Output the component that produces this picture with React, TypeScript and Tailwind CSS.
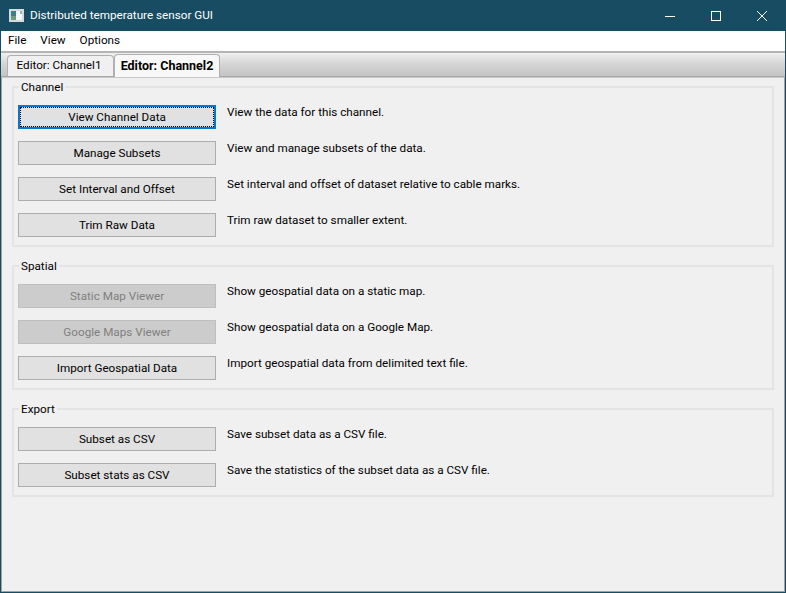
type Row = { label: string; text: string; disabled?: boolean; focused?: boolean };

const groups: { title: string; rows: Row[] }[] = [
  {
    title: 'Channel',
    rows: [
      { label: 'View Channel Data', text: 'View the data for this channel.', focused: true },
      { label: 'Manage Subsets', text: 'View and manage subsets of the data.' },
      { label: 'Set Interval and Offset', text: 'Set interval and offset of dataset relative to cable marks.' },
      { label: 'Trim Raw Data', text: 'Trim raw dataset to smaller extent.' },
    ],
  },
  {
    title: 'Spatial',
    rows: [
      { label: 'Static Map Viewer', text: 'Show geospatial data on a static map.', disabled: true },
      { label: 'Google Maps Viewer', text: 'Show geospatial data on a Google Map.', disabled: true },
      { label: 'Import Geospatial Data', text: 'Import geospatial data from delimited text file.' },
    ],
  },
  {
    title: 'Export',
    rows: [
      { label: 'Subset as CSV', text: 'Save subset data as a CSV file.' },
      { label: 'Subset stats as CSV', text: 'Save the statistics of the subset data as a CSV file.' },
    ],
  },
];

const ActionButton = ({ row }: { row: Row }) => {
  if (row.disabled) {
    return (
      <button disabled className="w-[198px] h-6 shrink-0 pt-px bg-[#cccccc] border border-[#bfbfbf] text-[#7f7f7f]">
        {row.label}
      </button>
    );
  }
  if (row.focused) {
    return (
      <button className="w-[198px] h-6 shrink-0 bg-[#e1e1e1] border-2 border-[#0078d7] text-black">
        <span className="flex items-center justify-center w-full h-full pt-px border border-dotted border-black">
          {row.label}
        </span>
      </button>
    );
  }
  return (
    <button className="w-[198px] h-6 shrink-0 pt-px bg-[#e1e1e1] border border-[#adadad] text-black">
      {row.label}
    </button>
  );
};

const App = () => {
  return (
    <div className="w-[786px] h-[593px] flex flex-col border border-t-0 border-[#174c62] overflow-hidden text-[11.7px] font-['Roboto','Noto_Sans',sans-serif] text-black">
      {/* Title bar */}
      <div className="h-[31px] shrink-0 flex items-center bg-[#174c62] text-white">
        <svg width="16" height="16" viewBox="0 0 16 16" className="ml-[8px] mr-[5px]">
          <rect x="0" y="1" width="15" height="13" fill="#d5dadc" />
          <rect x="2" y="3" width="5" height="9" fill="#3f7f86" />
          <rect x="2" y="8" width="5" height="4" fill="#6d9c7e" />
          <rect x="7" y="3" width="6" height="9" fill="#f4f6f7" />
          <rect x="11" y="3" width="2" height="3" fill="#9fb0b8" />
        </svg>
        <span className="whitespace-nowrap">Distributed temperature sensor GUI</span>
        <div className="ml-auto flex items-center">
          <div className="w-[46px] h-[31px] flex items-center justify-center">
            <svg width="10" height="10" viewBox="0 0 10 10" stroke="white" fill="none">
              <path d="M0 5.5H10" />
            </svg>
          </div>
          <div className="w-[46px] h-[31px] flex items-center justify-center">
            <svg width="10" height="10" viewBox="0 0 10 10" stroke="white" fill="none">
              <rect x="0.5" y="0.5" width="9" height="9" />
            </svg>
          </div>
          <div className="w-[46px] h-[31px] flex items-center justify-center">
            <svg width="10" height="10" viewBox="0 0 10 10" stroke="white" fill="none">
              <path d="M0 0L10 10M10 0L0 10" />
            </svg>
          </div>
        </div>
      </div>

      {/* Menu bar */}
      <div className="h-5 shrink-0 flex items-center bg-white pl-[7px] gap-[14px]">
        <span>File</span>
        <span>View</span>
        <span>Options</span>
      </div>

      {/* Tabs */}
      <div className="h-[26px] shrink-0 flex items-end pl-[6px] border-t-2 border-[#b4b4b4] border-b border-b-[#a8a8a8] bg-gradient-to-b from-[#f0f0f0] via-[#d4d4d4] to-[#c4c4c4]">
        <div className="h-[21px] w-[107px] flex items-center justify-center pr-[3px] bg-[#f0f0f0] border border-b-0 border-[#b0b0b0] rounded-t-sm">
          Editor: Channel1
        </div>
        <div className="h-[23px] w-[106px] flex items-center justify-center bg-[#f8f8f8] border border-b-0 border-[#b0b0b0] rounded-t-sm text-[12.5px] font-bold -mb-px">
          Editor: Channel2
        </div>
      </div>

      {/* Tab page */}
      <div className="flex-1 bg-[#f0f0f0] border border-t-[#c8c8c8] border-x-[#a0a0a0] border-b-[#a0a0a0] pt-[8px] px-[10px] flex flex-col gap-[18px]">
        {groups.map((group) => (
          <section
            key={group.title}
            className="relative border-2 border-[#e4e4e4] pt-[17px] pb-[8px] pl-[4px] pr-[4px] flex flex-col gap-3"
          >
            <span className="absolute -top-[9px] left-[5px] px-[2px] bg-[#f0f0f0] leading-4">{group.title}</span>
            {group.rows.map((row) => (
              <div key={row.label} className="flex items-start gap-[11px]">
                <ActionButton row={row} />
                <span className="leading-4 whitespace-nowrap -mt-px">{row.text}</span>
              </div>
            ))}
          </section>
        ))}
      </div>
    </div>
  );
};

export default App;
